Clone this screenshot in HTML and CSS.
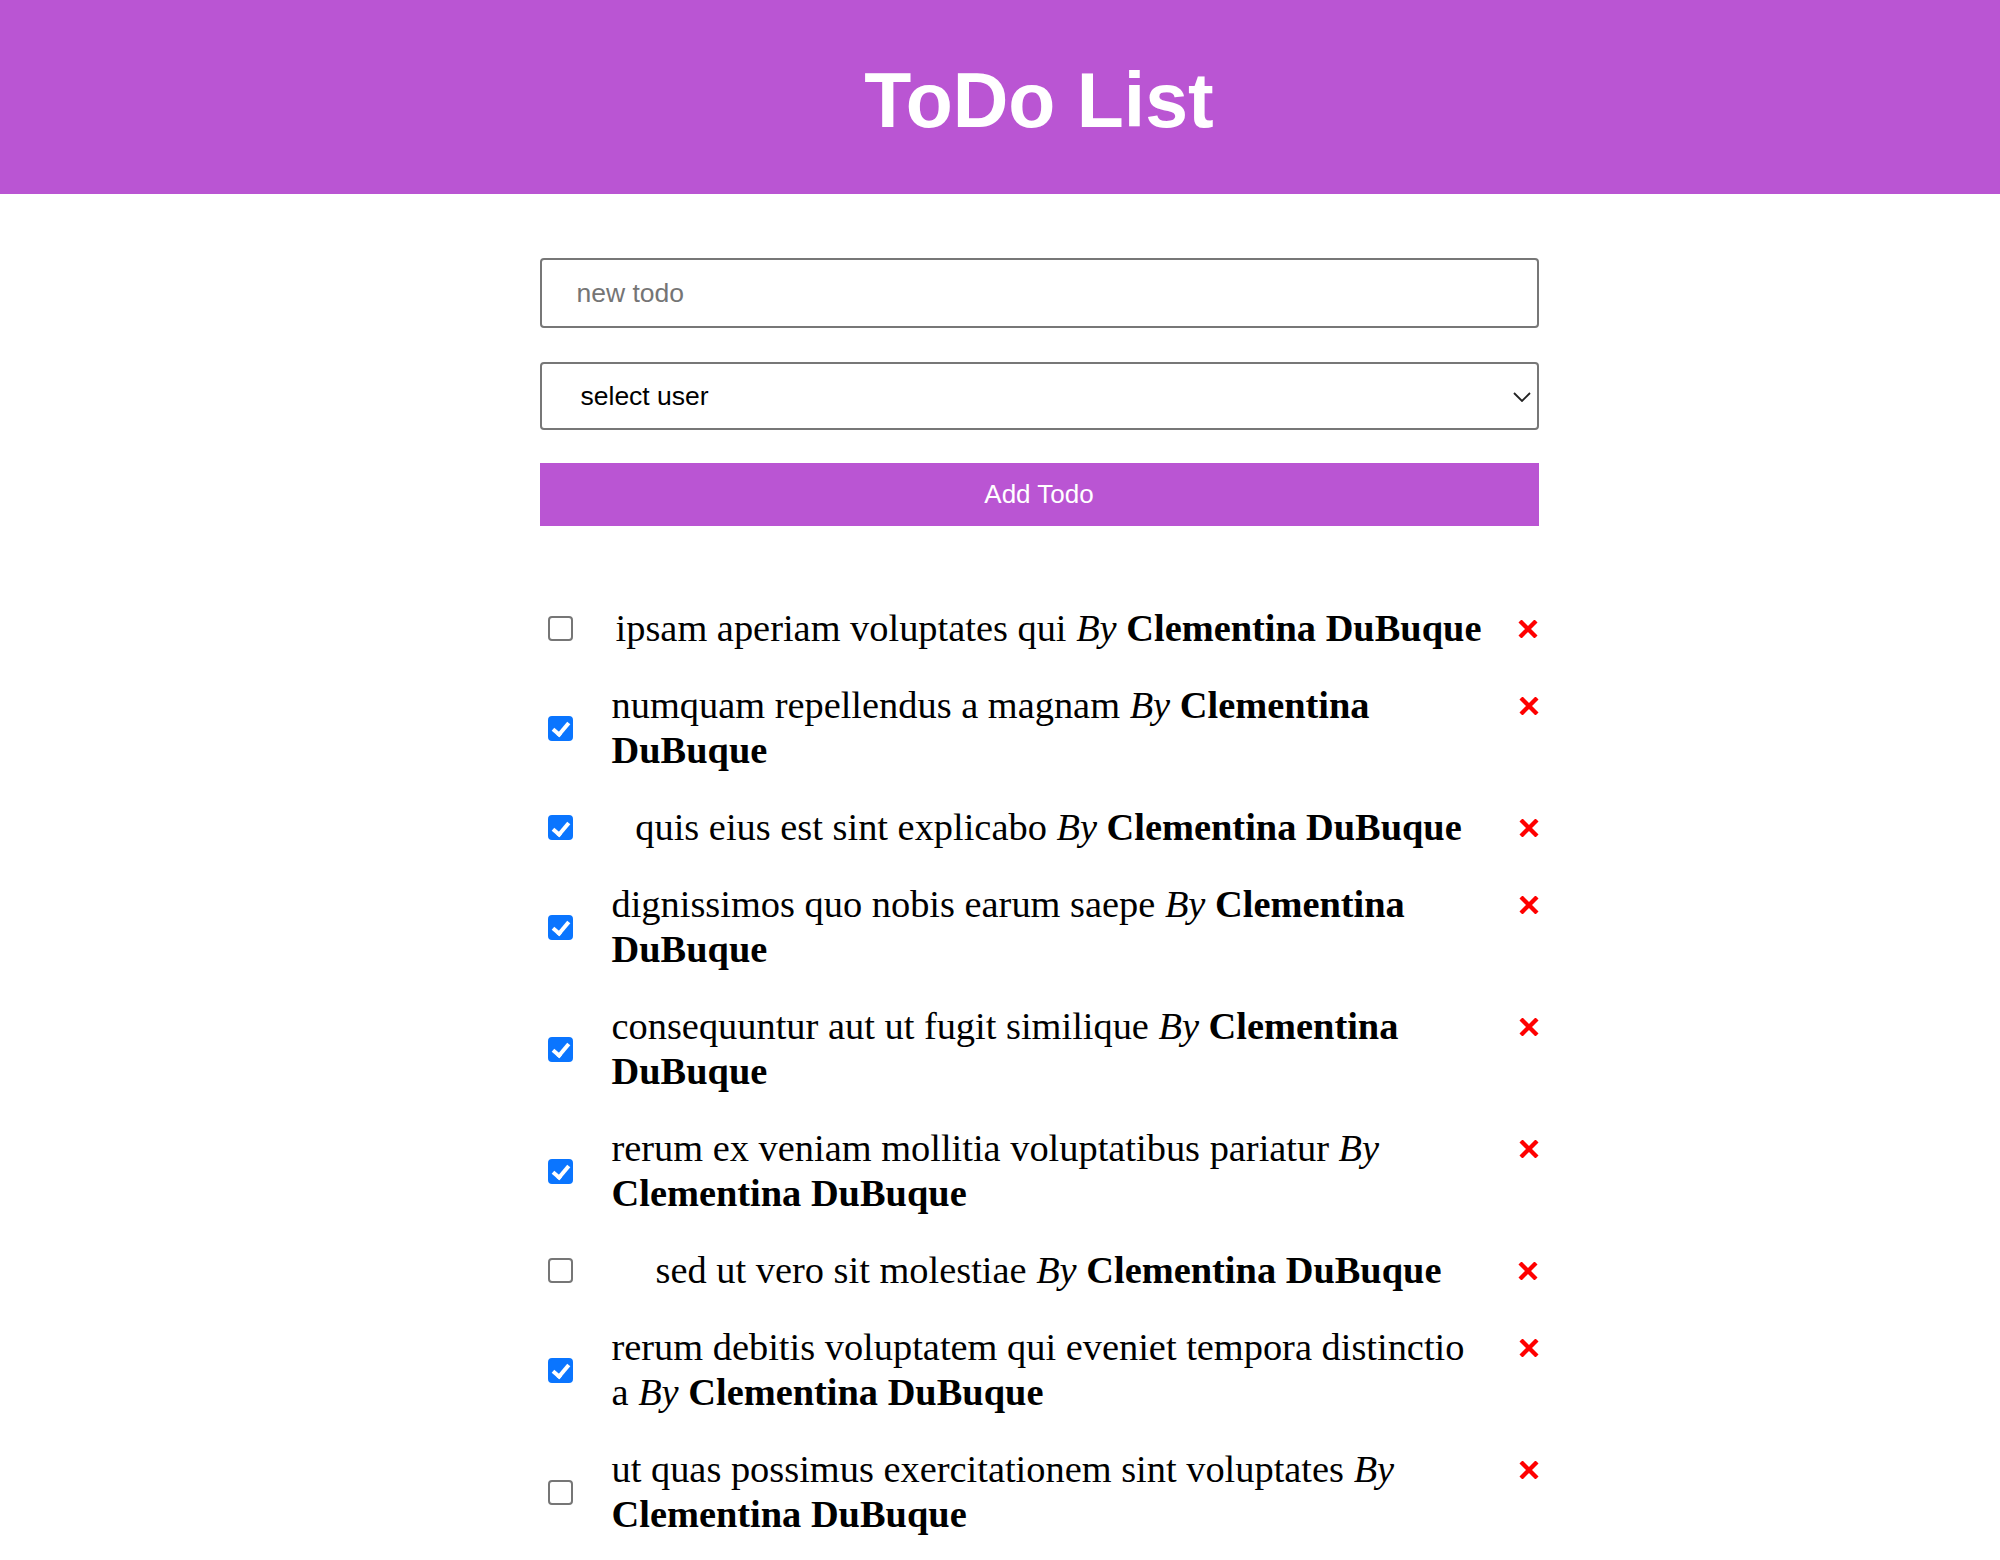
FILE: index.html
```html
<!DOCTYPE html>
<html lang="en">
<head>
<meta charset="utf-8">
<title>ToDo List</title>
<link rel="stylesheet" href="styles.css">
</head>
<body>
<header class="app-header">
  <h1 class="app-title">ToDo List</h1>
</header>
<main class="page">
  <div class="container">
    <form class="todo-form">
      <input class="todo-input" type="text" placeholder="new todo">
      <div class="select-wrap">
        <select class="user-select">
          <option>select user</option>
        </select>
        <svg class="select-arrow" width="18" height="10" viewBox="0 0 18 10"><path d="M1 1 L9 9 L17 1" fill="none" stroke="#222" stroke-width="1.8"/></svg>
      </div>
      <button class="add-btn" type="button">Add Todo</button>
    </form>
    <ul class="todo-list">
      <li class="todo-item"><input class="todo-check" type="checkbox"><span class="todo-text">ipsam aperiam voluptates qui <i>By</i> <b>Clementina DuBuque</b></span><span class="todo-del"><svg width="20" height="18" viewBox="0 0 20 18"><path d="M2 1 L18 17 M18 1 L2 17" stroke="#ff0000" stroke-width="4.3"/></svg></span></li>
      <li class="todo-item"><input class="todo-check" type="checkbox" checked><span class="todo-text">numquam repellendus a magnam <i>By</i> <b>Clementina DuBuque</b></span><span class="todo-del"><svg width="20" height="18" viewBox="0 0 20 18"><path d="M2 1 L18 17 M18 1 L2 17" stroke="#ff0000" stroke-width="4.3"/></svg></span></li>
      <li class="todo-item"><input class="todo-check" type="checkbox" checked><span class="todo-text">quis eius est sint explicabo <i>By</i> <b>Clementina DuBuque</b></span><span class="todo-del"><svg width="20" height="18" viewBox="0 0 20 18"><path d="M2 1 L18 17 M18 1 L2 17" stroke="#ff0000" stroke-width="4.3"/></svg></span></li>
      <li class="todo-item"><input class="todo-check" type="checkbox" checked><span class="todo-text">dignissimos quo nobis earum saepe <i>By</i> <b>Clementina DuBuque</b></span><span class="todo-del"><svg width="20" height="18" viewBox="0 0 20 18"><path d="M2 1 L18 17 M18 1 L2 17" stroke="#ff0000" stroke-width="4.3"/></svg></span></li>
      <li class="todo-item"><input class="todo-check" type="checkbox" checked><span class="todo-text">consequuntur aut ut fugit similique <i>By</i> <b>Clementina DuBuque</b></span><span class="todo-del"><svg width="20" height="18" viewBox="0 0 20 18"><path d="M2 1 L18 17 M18 1 L2 17" stroke="#ff0000" stroke-width="4.3"/></svg></span></li>
      <li class="todo-item"><input class="todo-check" type="checkbox" checked><span class="todo-text">rerum ex veniam mollitia voluptatibus pariatur <i>By</i> <b>Clementina DuBuque</b></span><span class="todo-del"><svg width="20" height="18" viewBox="0 0 20 18"><path d="M2 1 L18 17 M18 1 L2 17" stroke="#ff0000" stroke-width="4.3"/></svg></span></li>
      <li class="todo-item"><input class="todo-check" type="checkbox"><span class="todo-text">sed ut vero sit molestiae <i>By</i> <b>Clementina DuBuque</b></span><span class="todo-del"><svg width="20" height="18" viewBox="0 0 20 18"><path d="M2 1 L18 17 M18 1 L2 17" stroke="#ff0000" stroke-width="4.3"/></svg></span></li>
      <li class="todo-item"><input class="todo-check" type="checkbox" checked><span class="todo-text">rerum debitis voluptatem qui eveniet tempora distinctio a <i>By</i> <b>Clementina DuBuque</b></span><span class="todo-del"><svg width="20" height="18" viewBox="0 0 20 18"><path d="M2 1 L18 17 M18 1 L2 17" stroke="#ff0000" stroke-width="4.3"/></svg></span></li>
      <li class="todo-item"><input class="todo-check" type="checkbox"><span class="todo-text">ut quas possimus exercitationem sint voluptates <i>By</i> <b>Clementina DuBuque</b></span><span class="todo-del"><svg width="20" height="18" viewBox="0 0 20 18"><path d="M2 1 L18 17 M18 1 L2 17" stroke="#ff0000" stroke-width="4.3"/></svg></span></li>
    </ul>
  </div>
</main>
</body>
</html>
```
FILE: styles.css
```css
* { box-sizing: border-box; }
html, body { margin: 0; padding: 0; background: #fff; }
body { font-family: "Liberation Serif", "Times New Roman", serif; color: #000; }

.app-header {
  height: 194px;
  background: #ba55d3;
  display: flex;
  align-items: center;
  justify-content: center;
  padding-left: 78px;
}
.app-title {
  margin: 0;
  color: #fff;
  font-family: "Liberation Sans", Arial, sans-serif;
  font-weight: bold;
  font-size: 77px;
  line-height: 1;
  padding-top: 6px;
}

.page {
  display: flex;
  justify-content: center;
  padding-left: 78px;
}
.container { width: 999px; }

.todo-form {
  display: flex;
  flex-direction: column;
  margin-top: 64px;
}
.todo-input, .user-select {
  width: 100%;
  border: 2px solid #777;
  border-radius: 4px;
  background: #fff;
  font-family: "Liberation Sans", Arial, sans-serif;
  font-size: 26.5px;
  color: #000;
  outline: none;
}
.todo-input {
  height: 70px;
  padding: 0 0 0 35px;
}
.todo-input::placeholder { color: #757575; }

.select-wrap {
  position: relative;
  margin-top: 34px;
}
.user-select {
  display: block;
  height: 68px;
  padding: 0 0 0 39px;
  appearance: none;
  -webkit-appearance: none;
}
.select-arrow {
  position: absolute;
  right: 8px;
  top: 30px;
  pointer-events: none;
}

.add-btn {
  margin-top: 33px;
  height: 63px;
  border: none;
  border-radius: 0;
  background: #ba55d3;
  color: #fff;
  font-family: "Liberation Sans", Arial, sans-serif;
  font-size: 26px;
  padding: 0;
}

.todo-list {
  list-style: none;
  margin: 80px 0 0;
  padding: 0;
  display: flex;
  flex-direction: column;
  gap: 32px;
}
.todo-item {
  display: flex;
  align-items: center;
  justify-content: space-between;
}
.todo-check {
  appearance: none;
  -webkit-appearance: none;
  flex: none;
  width: 25px;
  height: 25px;
  margin: 0 39px 0 8px;
  border: 2px solid #767676;
  border-radius: 4px;
  background: #fff;
  position: relative;
}
.todo-check:checked {
  background: #0a75ff;
  border-color: #0a75ff;
}
.todo-check:checked::after {
  content: "";
  position: absolute;
  left: 6.5px;
  top: 1.5px;
  width: 6px;
  height: 13px;
  border-right: 4px solid #fff;
  border-bottom: 4px solid #fff;
  transform: rotate(40deg);
}
.todo-text {
  flex: 0 1 auto;
  font-size: 38.4px;
  line-height: 45px;
}
.todo-text b { font-weight: bold; }
.todo-del {
  flex: none;
  align-self: flex-start;
  height: 45px;
  width: 20px;
  margin-left: 33px;
  display: flex;
  align-items: center;
}
.todo-del svg { display: block; }
```
